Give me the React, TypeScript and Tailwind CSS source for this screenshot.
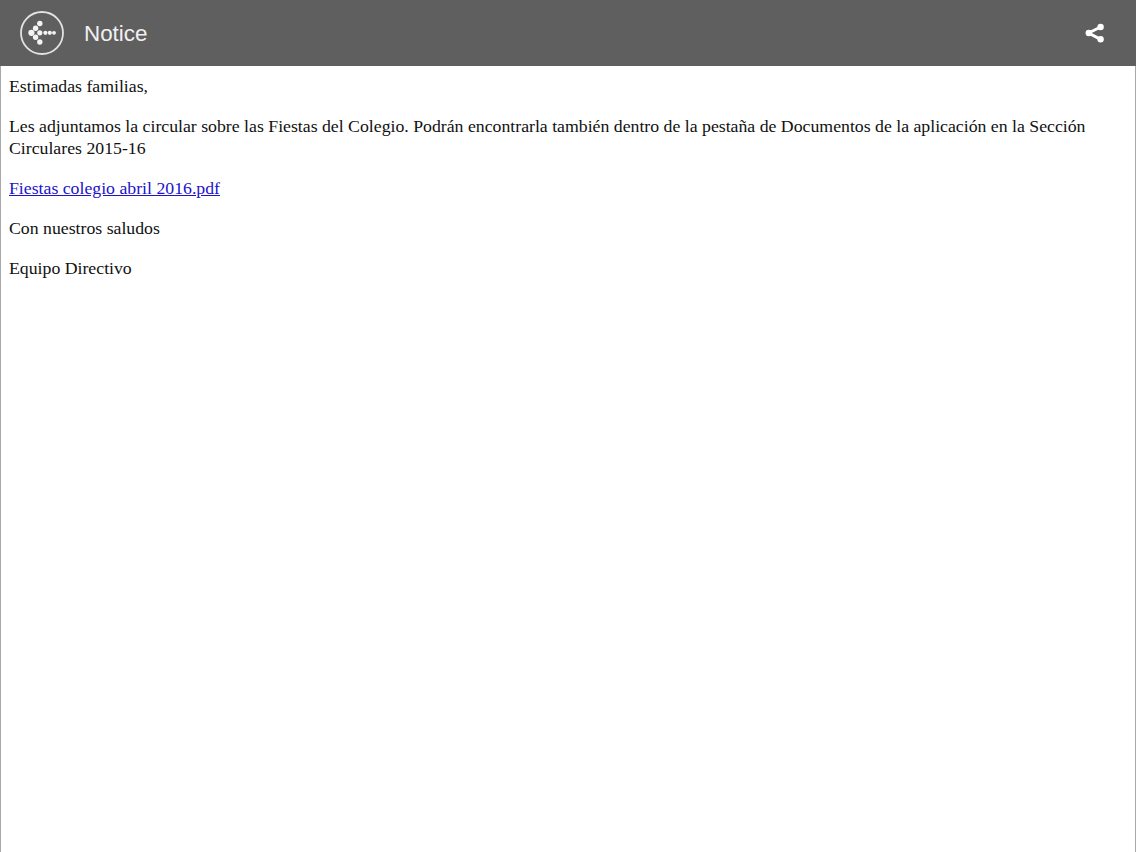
function BackLogo() {
  const dots = [
    [31.4, 32.8, 3.1], [35.6, 28.2, 2.7], [35.6, 37.3, 2.7], [39.8, 23.5, 2.7], [39.8, 32.8, 2.6], [39.8, 42, 2.7],
    [45.4, 32.8, 2.1], [49.8, 32.8, 2.1], [54, 32.8, 1.9],
  ];
  return (
    <svg width="46" height="46" viewBox="19 10 46 46" className="shrink-0">
      <circle cx="42" cy="33" r="21" fill="none" stroke="#e2e2e2" strokeWidth="1.8" />
      {dots.map(([cx, cy, r], i) => (
        <circle key={i} cx={cx} cy={cy} r={r} fill="#f4f4f4" />
      ))}
    </svg>
  );
}

function ShareIcon() {
  return (
    <svg width="20" height="20" viewBox="0 0 20 20" className="shrink-0">
      <path d="M15.6 4 3.6 10 15.6 16.4" fill="none" stroke="#fff" strokeWidth="3" />
      <circle cx="3.8" cy="10" r="3.2" fill="#fff" />
      <circle cx="15.6" cy="4" r="3.2" fill="#fff" />
      <circle cx="15.6" cy="16.2" r="3.2" fill="#fff" />
    </svg>
  );
}

export default function App() {
  return (
    <div className="flex h-[852px] flex-col overflow-hidden bg-white">
      {/* Header */}
      <header className="flex h-[66px] shrink-0 items-center justify-between bg-[#5f5f5f] pl-[19px] pr-[31px]">
        <div className="flex items-center gap-[19px]">
          <BackLogo />
          <span className="mt-[2px] font-['Liberation_Sans',sans-serif] text-[22.4px] leading-none text-[#f0f0f0]">Notice</span>
        </div>
        <ShareIcon />
      </header>

      {/* Notice body */}
      <main className="flex-1 border-x border-[#a8a8a8] px-2 pt-[9px] font-['Liberation_Serif',serif] text-[17.75px] leading-[22px] text-[#111]">
        <p className="mb-[18px]">Estimadas familias,</p>
        <p className="mb-[18px]">
          Les adjuntamos la circular sobre las Fiestas del Colegio. Podrán encontrarla también dentro de la pestaña de
          Documentos de la aplicación en la Sección Circulares 2015-16
        </p>
        <p className="mb-[18px]">
          <a href="#" className="text-[#2211cc] underline">Fiestas colegio abril 2016.pdf</a>
        </p>
        <p className="mb-[18px]">Con nuestros saludos</p>
        <p>Equipo Directivo</p>
      </main>
    </div>
  );
}
